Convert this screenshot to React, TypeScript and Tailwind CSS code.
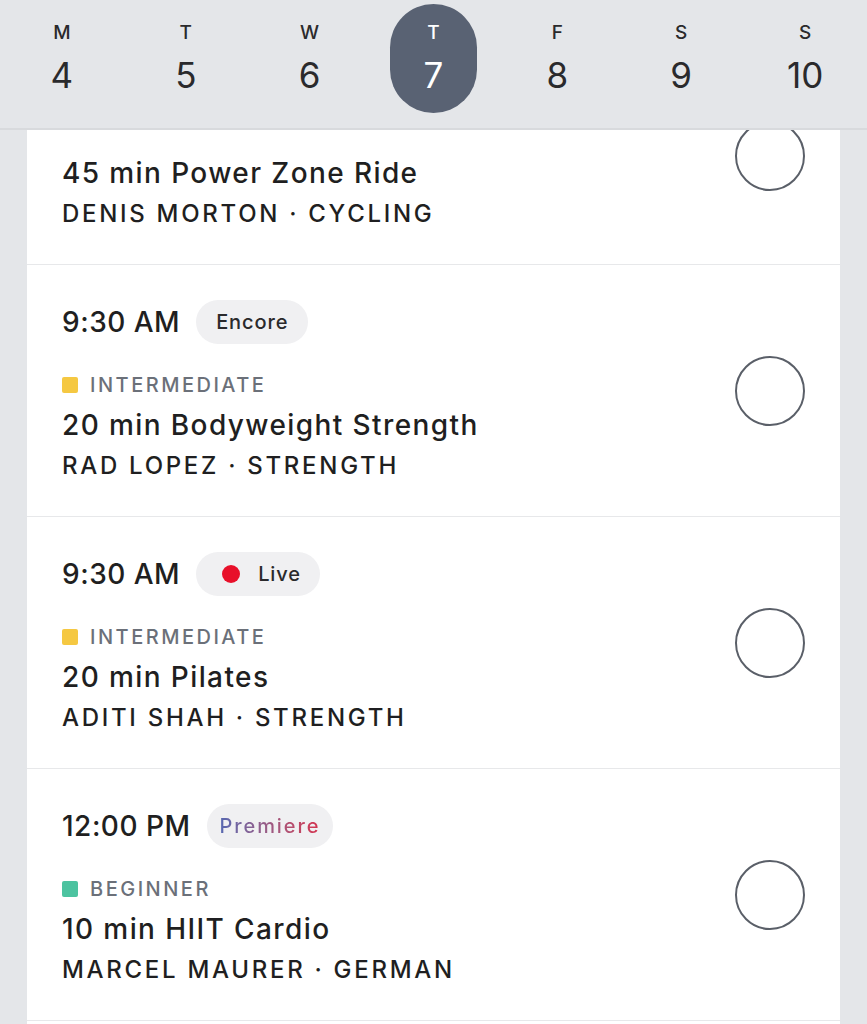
const days = [
  { d: "M", n: 4 },
  { d: "T", n: 5 },
  { d: "W", n: 6 },
  { d: "T", n: 7, on: true },
  { d: "F", n: 8 },
  { d: "S", n: 9 },
  { d: "S", n: 10 },
];

type Row = {
  time?: string;
  badge?: "encore" | "live" | "premiere";
  level?: { label: string; color: string };
  title: string;
  sub: string;
};

// first row is scrolled up under the day strip, so its time line is not shown
const rows: Row[] = [
  { title: "45 min Power Zone Ride", sub: "DENIS MORTON · CYCLING" },
  {
    time: "9:30 AM",
    badge: "encore",
    level: { label: "INTERMEDIATE", color: "bg-[#f5c842]" },
    title: "20 min Bodyweight Strength",
    sub: "RAD LOPEZ · STRENGTH",
  },
  {
    time: "9:30 AM",
    badge: "live",
    level: { label: "INTERMEDIATE", color: "bg-[#f5c842]" },
    title: "20 min Pilates",
    sub: "ADITI SHAH · STRENGTH",
  },
  {
    time: "12:00 PM",
    badge: "premiere",
    level: { label: "BEGINNER", color: "bg-[#4cc3a0]" },
    title: "10 min HIIT Cardio",
    sub: "MARCEL MAURER · GERMAN",
  },
];

function Badge({ kind }: { kind: Row["badge"] }) {
  if (kind === "encore")
    return (
      <span className="flex h-[44px] items-center rounded-full bg-[#f0f0f2] px-[20px] text-[20px] font-medium tracking-[0.9px] text-[#2a2a2c]">
        Encore
      </span>
    );
  if (kind === "live")
    return (
      <span className="flex h-[44px] items-center gap-[18px] rounded-full bg-[#f0f0f2] pl-[26px] pr-[19px] text-[20px] font-medium tracking-[0.9px] text-[#2a2a2c]">
        <span className="size-[18px] rounded-full bg-[#e8102a]" />
        Live
      </span>
    );
  return (
    <span className="flex h-[44px] items-center rounded-full bg-[#f0f0f2] px-[13px] text-[20px] font-medium tracking-[1.9px]">
      <span className="bg-gradient-to-r from-[#5868b0] to-[#d4304f] bg-clip-text text-transparent">Premiere</span>
    </span>
  );
}

function ClassRow({ r }: { r: Row }) {
  return (
    <div className="flex items-center justify-between border-b border-[#e7e8ea] px-[35px] pb-[35px] pt-[35px]">
      <div className="flex flex-col">
        <div className="flex h-[44px] items-center gap-[16px]">
          {r.time && <span className="text-[28px] font-medium tracking-[0.5px] text-[#1f1f21]">{r.time}</span>}
          {r.badge && <Badge kind={r.badge} />}
        </div>
        {r.level ? (
          <div className="mt-[29px] flex h-[24px] items-center gap-[12px]">
            <span className={`size-[16px] rounded-[2px] ${r.level.color}`} />
            <span className="text-[20px] font-medium tracking-[2.5px] text-[#6b7079]">{r.level.label}</span>
          </div>
        ) : null}
        <div
          className={`${r.level ? "mt-[10px]" : "mt-[28px]"} h-[36px] text-[28px] font-medium leading-[36px] tracking-[1.4px] text-[#1f1f21]`}
        >
          {r.title}
        </div>
        <div className="mt-[8px] h-[30px] text-[24px] font-medium leading-[30px] tracking-[2.7px] text-[#1f1f21]">
          {r.sub}
        </div>
      </div>
      <div className="size-[70px] shrink-0 rounded-full border-2 border-[#5a5f68]" />
    </div>
  );
}

export default function App() {
  return (
    <div
      className="flex h-[1024px] w-[867px] flex-col overflow-hidden bg-[#e4e6e9]"
      style={{ fontFamily: "Inter, 'Noto Sans', sans-serif" }}
    >
      <div className="relative z-10 grid h-[130px] shrink-0 grid-cols-7 border-b-2 border-[#d8dadd] bg-[#e4e6e9]">
        {days.map((x, i) => (
          <div key={i} className="flex justify-center pt-[4px]">
            <div
              className={`flex h-[109px] w-[87px] flex-col items-center rounded-full pt-[17px] ${
                x.on ? "bg-[#596273] text-white" : "text-[#2a2a2c]"
              }`}
            >
              <span className="text-[19px] font-medium leading-[24px]">{x.d}</span>
              <span className="mt-[10px] text-[35px] leading-[40px]">{x.n}</span>
            </div>
          </div>
        ))}
      </div>
      <div className="flex-1 overflow-hidden">
        <div className="mx-[27px] mt-[-82px] bg-white">
          {rows.map((r, i) => (
            <ClassRow key={i} r={r} />
          ))}
          <div className="h-[40px]" />
        </div>
      </div>
    </div>
  );
}
